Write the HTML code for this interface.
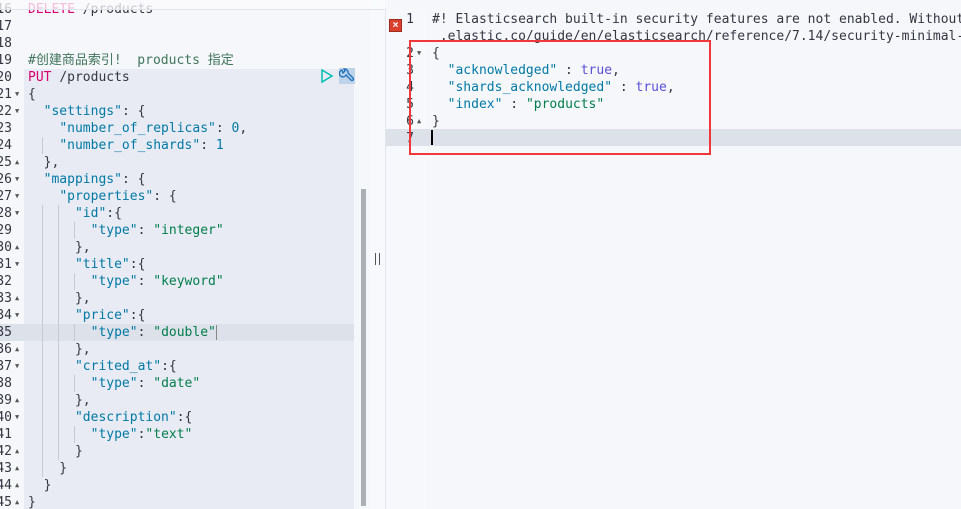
<!DOCTYPE html>
<html style="overflow:hidden"><head><meta charset="utf-8"><style>
*{margin:0;padding:0;box-sizing:border-box}
html,body{width:961px;height:509px;overflow:hidden}
body{background:#f5f7fa;position:relative;font-family:"DejaVu Sans Mono","Liberation Mono","Noto Sans CJK SC",monospace;font-size:13px;color:#343741}
.l{position:absolute;height:17px;line-height:17px;white-space:pre}
.n{position:absolute;height:17px;line-height:17px;text-align:right;color:#343741}
.a{position:absolute;font-size:7px;color:#555;line-height:17px}
.k{color:#0079a5}.s{color:#017d4b}.r{color:#d6006f}.c{color:#41755c}.t{color:#5a4fd6}.p{color:#343741}.b{color:#343741}
.g{position:absolute;width:1px;background:#c5c9d1}
#wrap{position:absolute;left:0;top:2px;width:961px;height:509px}
#rp{position:absolute;left:386px;top:9px;width:575px;height:500px;overflow:hidden;background:#f5f7fa}
#ri{position:absolute;left:0;top:2px;width:575px;height:500px}
</style></head><body>
<div style="position:absolute;left:0;top:0;width:385px;height:509px;background:#f5f7fa"></div>
<div style="position:absolute;left:24px;top:69px;width:330px;height:440px;background:#e8ebf3"></div>
<div style="position:absolute;left:0;top:324px;width:354px;height:17px;background:#dde1e9"></div>
<div style="position:absolute;left:361px;top:189px;width:5px;height:317px;background:#abafb6"></div>
<div style="position:absolute;left:370px;top:0;width:15px;height:509px;background:#f8f9fc"></div>
<div style="position:absolute;left:385px;top:0;width:1px;height:509px;background:#e3e6ec"></div>
<div style="position:absolute;left:375px;top:253px;width:1px;height:12px;background:#555"></div>
<div style="position:absolute;left:379px;top:253px;width:1px;height:12px;background:#555"></div>

<div id="wrap">
<div id="ln"></div>
<div class="g" style="left:42px;top:135px;height:17px"></div>
<div class="g" style="left:42px;top:203px;height:272px"></div>
<div class="g" style="left:58px;top:203px;height:255px"></div>
<div class="g" style="left:74px;top:220px;height:17px"></div>
<div class="g" style="left:74px;top:271px;height:17px"></div>
<div class="g" style="left:74px;top:322px;height:17px"></div>
<div class="g" style="left:74px;top:373px;height:17px"></div>
<div class="g" style="left:74px;top:424px;height:17px"></div>

<div class="l" style="left:28px;top:-1px"><span class="r">DELETE</span> <span class="p">/products</span></div>
<div class="l" style="left:28px;top:50px"><span class="c">#创建商品索引!  products 指定</span></div>
<div class="l" style="left:28px;top:67px"><span class="r">PUT</span> <span class="p">/products</span></div>
<div class="l" style="left:28px;top:84px">{</div>
<div class="l" style="left:28px;top:101px">  <span class="k">"settings"</span>: {</div>
<div class="l" style="left:28px;top:118px">    <span class="k">"number_of_replicas"</span>: <span class="k">0</span>,</div>
<div class="l" style="left:28px;top:135px">    <span class="k">"number_of_shards"</span>: <span class="k">1</span></div>
<div class="l" style="left:28px;top:152px">  },</div>
<div class="l" style="left:28px;top:169px">  <span class="k">"mappings"</span>: {</div>
<div class="l" style="left:28px;top:186px">    <span class="k">"properties"</span>: {</div>
<div class="l" style="left:28px;top:203px">      <span class="k">"id"</span>:{</div>
<div class="l" style="left:28px;top:220px">        <span class="k">"type"</span>: <span class="s">"integer"</span></div>
<div class="l" style="left:28px;top:237px">      },</div>
<div class="l" style="left:28px;top:254px">      <span class="k">"title"</span>:{</div>
<div class="l" style="left:28px;top:271px">        <span class="k">"type"</span>: <span class="s">"keyword"</span></div>
<div class="l" style="left:28px;top:288px">      },</div>
<div class="l" style="left:28px;top:305px">      <span class="k">"price"</span>:{</div>
<div class="l" style="left:28px;top:322px">        <span class="k">"type"</span>: <span class="s">"double"</span><span style="border-left:1px solid #888"> </span></div>
<div class="l" style="left:28px;top:339px">      },</div>
<div class="l" style="left:28px;top:356px">      <span class="k">"crited_at"</span>:{</div>
<div class="l" style="left:28px;top:373px">        <span class="k">"type"</span>: <span class="s">"date"</span></div>
<div class="l" style="left:28px;top:390px">      },</div>
<div class="l" style="left:28px;top:407px">      <span class="k">"description"</span>:{</div>
<div class="l" style="left:28px;top:424px">        <span class="k">"type"</span>:<span class="s">"text"</span></div>
<div class="l" style="left:28px;top:441px">      }</div>
<div class="l" style="left:28px;top:458px">    }</div>
<div class="l" style="left:28px;top:475px">  }</div>
<div class="l" style="left:28px;top:492px">}</div>
</div>

<div style="position:absolute;left:0;top:0;width:386px;height:9px;background:#fbfbfd;opacity:.75"></div>
<div style="position:absolute;left:0;top:9px;width:961px;height:1px;background:#dfe2e8"></div>

<svg style="position:absolute;left:320px;top:68px" width="14" height="16"><path d="M2 2 L12 8 L2 14 Z" fill="none" stroke="#00bfb3" stroke-width="1.5"/></svg>
<div style="position:absolute;left:339px;top:68px;width:16px;height:16px;background:#bcd3ea"></div>
<svg style="position:absolute;left:339px;top:68px" width="16" height="16"><path d="M3 2 A3.5 3.5 0 1 0 7 7 L12 12 A1.4 1.4 0 0 0 14 10 L9 5 A3.5 3.5 0 0 0 5 1 L6 3 L4 5 Z" fill="none" stroke="#1d6fb8" stroke-width="1.3"/></svg>

<div id="rp">
<div style="position:absolute;left:0;top:0;width:41px;height:500px;background:#f7f8fb"></div>
<div style="position:absolute;left:0;top:120px;width:575px;height:17px;background:#dce1ea"></div>
<div id="ri">
<div style="position:absolute;left:3px;top:8px;width:13px;height:13px;background:#d9402d;border:1px solid #a02a1e;color:#fff;font:bold 10px 'Liberation Sans',sans-serif;text-align:center;line-height:11px">×</div>
<div class="n" style="left:10px;width:18px;top:0px">1</div>
<div class="n" style="left:10px;width:18px;top:34px">2</div>
<div class="n" style="left:10px;width:18px;top:51px">3</div>
<div class="n" style="left:10px;width:18px;top:68px">4</div>
<div class="n" style="left:10px;width:18px;top:85px">5</div>
<div class="n" style="left:10px;width:18px;top:102px">6</div>
<div class="n" style="left:10px;width:18px;top:119px">7</div>
<div class="a" style="left:31px;top:34px">▼</div>
<div class="a" style="left:31px;top:102px">▲</div>
<div class="l" style="left:46px;top:0px">#! Elasticsearch built-in security features are not enabled. Without authentication</div>
<div class="l" style="left:46px;top:17px"> .elastic.co/guide/en/elasticsearch/reference/7.14/security-minimal-setup.html</div>
<div class="l" style="left:46px;top:34px"><span class="b">{</span></div>
<div class="l" style="left:46px;top:51px">  <span class="k">"acknowledged"</span> : <span class="t">true</span>,</div>
<div class="l" style="left:46px;top:68px">  <span class="k">"shards_acknowledged"</span> : <span class="t">true</span>,</div>
<div class="l" style="left:46px;top:85px">  <span class="k">"index"</span> : <span class="s">"products"</span></div>
<div class="l" style="left:46px;top:102px"><span class="b">}</span></div>
<div style="position:absolute;left:45px;top:119px;width:2px;height:15px;background:#000"></div>
</div>
</div>
<div style="position:absolute;left:409px;top:40px;width:302px;height:115px;border:2px solid #f0383c"></div>

<script>
var h='';for(var n=16;n<=45;n++){var t=17*(n-16)-1;h+='<div class="n" style="left:-8px;width:20px;top:'+t+'px">'+n+'</div>';}
var dn=[21,22,26,27,28,31,34,37,40],up=[25,30,33,36,39,42,43,44,45];
dn.forEach(function(n){h+='<div class="a" style="left:15px;top:'+(17*(n-16)-1)+'px">▼</div>'});
up.forEach(function(n){h+='<div class="a" style="left:15px;top:'+(17*(n-16)-1)+'px">▲</div>'});
document.getElementById('ln').innerHTML=h;
</script>
</body></html>
